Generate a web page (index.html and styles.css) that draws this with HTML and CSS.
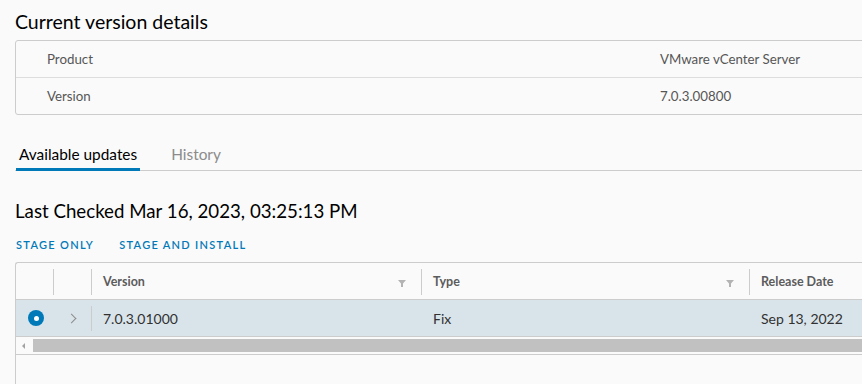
FILE: index.html
```html
<!DOCTYPE html>
<html lang="en">
<head>
    <meta charset="UTF-8">
    <title>Update</title>
    <link rel="stylesheet" href="styles.css">
</head>
<body>
    <div class="page">
        <h2 class="section-title">Current version details</h2>
        <div class="details">
            <div class="details-row">
                <div class="details-label">Product</div>
                <div class="details-value">VMware vCenter Server</div>
            </div>
            <div class="details-row">
                <div class="details-label">Version</div>
                <div class="details-value">7.0.3.00800</div>
            </div>
        </div>

        <div class="tabs">
            <div class="tab active">Available updates</div>
            <div class="tab">History</div>
        </div>

        <h2 class="checked">Last Checked Mar 16, 2023, 03:25:13 PM</h2>
        <div class="actions">
            <span class="action">STAGE ONLY</span>
            <span class="action">STAGE AND INSTALL</span>
        </div>

        <div class="grid">
            <div class="grid-head">
                <div class="cell"></div>
                <div class="cell sep"></div>
                <div class="cell sep">Version
                    <svg class="filter" width="8" height="7" viewBox="0 0 8 7"><path d="M0 0H8L5 3.5V7H3V3.5Z"/></svg>
                </div>
                <div class="cell sep">Type
                    <svg class="filter" width="8" height="7" viewBox="0 0 8 7"><path d="M0 0H8L5 3.5V7H3V3.5Z"/></svg>
                </div>
                <div class="cell sep">Release Date</div>
            </div>
            <div class="grid-row selected">
                <div class="cell"><span class="radio"></span></div>
                <div class="cell"><span class="chevron"></span></div>
                <div class="cell sep">7.0.3.01000</div>
                <div class="cell">Fix</div>
                <div class="cell">Sep 13, 2022</div>
            </div>
            <div class="scrollbar">
                <span class="scroll-arrow"></span>
                <span class="scroll-thumb"></span>
            </div>
        </div>
    </div>
</body>
</html>
```

FILE: styles.css
```css
body {
    margin: 0;
    background: #fafafa;
    font-family: 'Lato', 'Noto Sans', sans-serif;
    color: #313131;
    overflow: hidden;
}
.page {
    width: 900px;
    padding-left: 15px;
}
.section-title {
    margin: 10px 0 6px 0;
    font-size: 19.5px;
    line-height: 24px;
    font-weight: 400;
    color: #000;
}
.details {
    border: 1px solid #ccc;
    border-radius: 3px;
}
.details-row {
    display: flex;
    height: 36px;
    align-items: center;
    font-size: 13.3px;
    color: #565656;
}
.details-row + .details-row {
    border-top: 1px solid #ddd;
}
.details-label {
    flex: none;
    width: 613px;
    padding-left: 31px;
}
.details-value {
    flex: 1;
}

.tabs {
    display: flex;
    height: 32px;
    margin-top: 23px;
    border-bottom: 1px solid #ccc;
}
.tab {
    height: 33px;
    margin-bottom: -1px;
    margin-left: 1px;
    margin-right: 27px;
    padding: 0 3px;
    font-size: 15.4px;
    line-height: 33px;
    color: #8c8c8c;
    box-sizing: border-box;
}
.tab.active {
    color: #000;
    box-shadow: inset 0 -3px 0 #0079b8;
}

.checked {
    margin: 28px 0 0 0;
    font-size: 18.7px;
    line-height: 24px;
    font-weight: 400;
    color: #000;
}
.actions {
    display: flex;
    gap: 25px;
    margin-top: 11px;
    height: 20px;
    align-items: center;
    padding-left: 1px;
}
.action {
    font-size: 11px;
    font-weight: 600;
    letter-spacing: 1.3px;
    color: #0079b8;
}

.grid {
    margin-top: 8px;
    height: 130px;
    border: 1px solid #ccc;
    border-right: none;
    border-radius: 3px 0 0 0;
}
.grid-head,
.grid-row {
    display: grid;
    grid-template-columns: 37px 38px 330px 328px 200px;
    height: 36px;
    border-bottom: 1px solid #ccc;
    align-items: center;
}
.grid-head {
    font-size: 12.5px;
    font-weight: 700;
    color: #5c5c5c;
}
.grid-row {
    font-size: 14px;
    color: #313131;
}
.grid-row.selected {
    background: #d9e4ea;
}
.cell {
    position: relative;
    height: 100%;
    display: flex;
    align-items: center;
    padding-left: 12px;
    box-sizing: border-box;
}
.cell.sep::before {
    content: "";
    position: absolute;
    left: 0;
    top: 6px;
    bottom: 5px;
    width: 1px;
    background: #ccc;
}
.grid-head .cell.sep::before {
    bottom: 4px;
}
.filter {
    position: absolute;
    right: 15px;
    top: 17px;
    fill: #b3b3b3;
}
.radio {
    width: 16px;
    height: 16px;
    border-radius: 50%;
    background: #0079b8;
    display: flex;
    align-items: center;
    justify-content: center;
}
.radio::after {
    content: "";
    width: 5px;
    height: 5px;
    border-radius: 50%;
    background: #fff;
}
.chevron {
    width: 6px;
    height: 6px;
    margin-left: 3px;
    border-top: 1.5px solid #8c8c8c;
    border-right: 1.5px solid #8c8c8c;
    transform: rotate(45deg);
}
.scrollbar {
    display: flex;
    align-items: center;
    height: 17px;
    border-bottom: 1px solid #ccc;
}
.scroll-arrow {
    width: 0;
    height: 0;
    margin-left: 6px;
    margin-right: 8px;
    border-top: 3px solid transparent;
    border-bottom: 3px solid transparent;
    border-right: 3px solid #a3a3a3;
}
.scroll-thumb {
    flex: 1;
    height: 13px;
    background: #c1c1c1;
}
```
